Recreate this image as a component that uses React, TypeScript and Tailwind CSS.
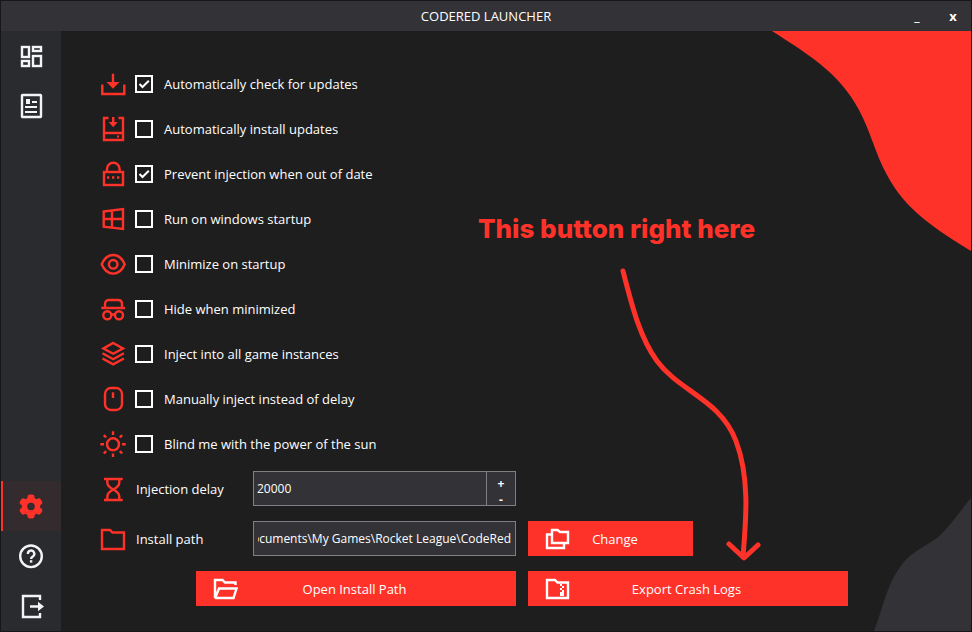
import { useState, type ReactNode } from "react";

function Icon({ children }: { children: ReactNode }) {
  return (
    <svg
      viewBox="0 0 26 26"
      className="size-[26px] shrink-0"
      fill="none"
      stroke="currentColor"
      strokeWidth="2.4"
      aria-hidden="true"
    >
      {children}
    </svg>
  );
}

const solid = { fill: "currentColor", stroke: "none" };

const DashboardIcon = () => (
  <Icon>
    <rect x="4" y="4" width="7" height="10" />
    <rect x="15" y="4" width="8" height="4" />
    <rect x="4" y="18" width="7" height="5" />
    <rect x="15" y="13" width="8" height="10" />
  </Icon>
);

const NewsIcon = () => (
  <Icon>
    <rect x="4" y="2" width="19" height="22" rx="0.5" />
    <rect x="8" y="6" width="4" height="5" {...solid} />
    <path d="M14 9h5M7 14h12M7 19h12" strokeWidth="2" />
  </Icon>
);

const GearIcon = () => (
  <Icon>
    <g {...solid}>
      <circle cx="13" cy="13.500" r="9.200" />
      <rect x="9.500" y="1.500" width="7" height="24" rx="2.500" />
      <rect x="9.500" y="1.500" width="7" height="24" rx="2.500" transform="rotate(60 13 13.500)" />
      <rect x="9.500" y="1.500" width="7" height="24" rx="2.500" transform="rotate(120 13 13.500)" />
    </g>
    <circle cx="13" cy="13.500" r="3.800" fill="#332b2e" stroke="none" />
  </Icon>
);

const HelpIcon = () => (
  <Icon>
    <circle cx="13" cy="13.300" r="10.800" />
    <path d="M9.900 11a3.200 3.200 0 1 1 4.900 2.500c-1.100.7-1.700 1.200-1.700 2.500" />
    <rect x="11.900" y="17.200" width="2.400" height="2.400" {...solid} />
  </Icon>
);

const ExitIcon = () => (
  <Icon>
    <path d="M22 7V3H5v21h17v-4M12 13.500h9" />
    <path d="M20 8.700 26 13.500l-6 4.800z" {...solid} />
  </Icon>
);

const DownloadIcon = () => (
  <Icon>
    <path d="M2.300 13.500V23h22v-9.500M13 2.700V12" />
    <path d="M6.500 11h13L13 17.700z" {...solid} />
  </Icon>
);

const InstallIcon = () => (
  <Icon>
    <path d="M8.500 2H4v22h19V2h-4.500M4 17h19M13.200 1v6" />
    <path d="M8.700 6h9l-4.500 5.300z" {...solid} />
    <rect x="17" y="19.500" width="2" height="2" {...solid} />
  </Icon>
);

const LockIcon = () => (
  <Icon>
    <rect x="4" y="11" width="19" height="13" />
    <path d="M7 11V8a6.300 6.300 0 0 1 12.600 0v3" />
    <path d="M7 16.500h2.300M12 16.500h2.300M17 16.500h2.300" />
  </Icon>
);

const WindowsIcon = () => (
  <Icon>
    <path d="M3.700 5.500 23 3v20L3.700 20.700zM12 4.500v17M4 13h19" />
  </Icon>
);

const EyeIcon = () => (
  <Icon>
    <path d="M1.700 13.300C4.300 7 8.500 4 13.200 4s8.900 3 11.500 9.300c-2.600 6.300-6.800 9.300-11.500 9.300s-8.900-3-11.500-9.300z" />
    <circle cx="13.200" cy="13.300" r="4.300" />
  </Icon>
);

const IncognitoIcon = () => (
  <Icon>
    <path d="M1.300 12h23.700M5 12V8c0-2.500 1.500-4 4-4h9c2.500 0 4 1.500 4 4v4M11 18.500h4" />
    <circle cx="7.300" cy="19.300" r="4" />
    <circle cx="19" cy="19.300" r="4" />
  </Icon>
);

const LayersIcon = () => (
  <Icon>
    <path d="M13.200 2 23 7.500l-9.800 5.200L3.400 7.500zM2.500 12.300l10.700 5.900 10.700-5.900M2.500 17.500l10.700 5.900 10.700-5.900" />
  </Icon>
);

const MouseIcon = () => (
  <Icon>
    <rect x="5" y="2" width="17" height="22" rx="6" />
    <path d="M13 6.300V12" />
  </Icon>
);

const SunIcon = () => (
  <Icon>
    <circle cx="13" cy="13.300" r="6" />
    <path d="M13 .300V4M13 22.500v3.500M.300 13.300H4M22 13.300h3.700M3.800 4.100l2.400 2.400M19.800 20.100l2.400 2.400M3.800 22.500l2.400-2.400M19.800 6.500l2.400-2.400" />
  </Icon>
);

const HourglassIcon = () => (
  <Icon>
    <path d="M4 3h18.700M4 24h18.700" />
    <path d="M7.300 3v3.500c0 3 2.200 5 6 7 3.800-2 6-4 6-7V3M7.300 24v-3.500c0-3 2.200-5 6-7 3.800 2 6 4 6 7V24" />
  </Icon>
);

const FolderIcon = () => (
  <Icon>
    <path d="M2 4h8l2.500 2.500H24V23H2z" />
  </Icon>
);

const FolderOpenIcon = () => (
  <Icon>
    <path d="M22.500 9V6.500H12L9.500 4H2v18M2 22.500 6 12.500h17.500L20.500 22H2" />
  </Icon>
);

const FoldersIcon = () => (
  <Icon>
    <path d="M7 4h5.500L15 6h8v11H7zM7 8.500H2V22h17v-5" />
  </Icon>
);

const ZipFolderIcon = () => (
  <Icon>
    <path d="M2 4h8l2.500 2.500H23V22H2z" />
    <path
      d="M15 8h2v2h-2zM17 10h2v2h-2zM15 12h2v2h-2zM17 14h2v2h-2zM15 16h4v4h-4z"
      {...solid}
    />
  </Icon>
);

const options = [
  { id: "check-updates", label: "Automatically check for updates", icon: DownloadIcon, on: true },
  { id: "install-updates", label: "Automatically install updates", icon: InstallIcon, on: false },
  { id: "prevent", label: "Prevent injection when out of date", icon: LockIcon, on: true },
  { id: "startup", label: "Run on windows startup", icon: WindowsIcon, on: false },
  { id: "minimize", label: "Minimize on startup", icon: EyeIcon, on: false },
  { id: "hide", label: "Hide when minimized", icon: IncognitoIcon, on: false },
  { id: "all-instances", label: "Inject into all game instances", icon: LayersIcon, on: false },
  { id: "manual", label: "Manually inject instead of delay", icon: MouseIcon, on: false },
  { id: "light", label: "Blind me with the power of the sun", icon: SunIcon, on: false },
];

function Option({ id, label, icon: Glyph, on }: (typeof options)[number]) {
  const [checked, setChecked] = useState(on);
  return (
    <li className="flex items-center">
      <span className="text-[#ff3229]">
        <Glyph />
      </span>
      <span className="relative ml-[9px] size-[18px]">
        <input
          id={id}
          type="checkbox"
          checked={checked}
          onChange={(e) => setChecked(e.target.checked)}
          className="block size-[18px] appearance-none border-2 border-white"
        />
        {checked && (
          <svg
            viewBox="0 0 18 18"
            className="pointer-events-none absolute inset-0"
            fill="none"
            stroke="white"
            strokeWidth="2"
            aria-hidden="true"
          >
            <path d="M4.500 9l3 3 6.300-6.300" />
          </svg>
        )}
      </span>
      <label htmlFor={id} className="pl-[11px]">
        {label}
      </label>
    </li>
  );
}

function NavButton({ label, active, children }: { label: string; active?: boolean; children: ReactNode }) {
  return (
    <button
      aria-label={label}
      className={
        active
          ? "flex h-[50px] items-center justify-center border-x-2 border-l-[#ff3229] border-r-transparent bg-[#332b2e] text-[#ff3229]"
          : "flex h-[50px] items-center justify-center text-[#f4f4f5]"
      }
    >
      {children}
    </button>
  );
}

export default function App() {
  const [delay, setDelay] = useState(20000);
  const [path, setPath] = useState("Documents\\My Games\\Rocket League\\CodeRed");

  return (
    <div className="flex min-h-screen flex-col border border-[#17171a] bg-[#1e1e1e] font-['Open_Sans',sans-serif] text-[13px] leading-5 font-medium text-white">
      <header className="grid h-[30px] grid-cols-[1fr_auto_1fr] items-center bg-[#333237]">
        <h1 className="col-start-2">CODERED LAUNCHER</h1>
        <div className="flex justify-end font-bold">
          <button aria-label="Minimize" className="h-[30px] w-9">
            _
          </button>
          <button aria-label="Close" className="h-[30px] w-9">
            x
          </button>
        </div>
      </header>

      <div className="flex flex-1">
        <nav className="flex w-[60px] shrink-0 flex-col bg-[#2a2b2f]">
          <NavButton label="Dashboard">
            <DashboardIcon />
          </NavButton>
          <NavButton label="News">
            <NewsIcon />
          </NavButton>
          <div className="flex-1" />
          <NavButton label="Settings" active>
            <GearIcon />
          </NavButton>
          <NavButton label="Help">
            <HelpIcon />
          </NavButton>
          <NavButton label="Exit">
            <ExitIcon />
          </NavButton>
        </nav>

        <main className="relative flex-1 overflow-hidden pt-10 pb-[25px] pl-[39px]">
          <svg
            viewBox="0 0 199 220"
            className="absolute top-0 right-0 w-[199px] fill-[#ff3229]"
            aria-hidden="true"
          >
            <path d="M0 0C34 22 67 41 87 79c11 20 16 43 28 65 19 36 49 54 84 76V0z" />
          </svg>
          <svg
            viewBox="0 0 97 133"
            className="absolute right-0 bottom-0 w-[97px] fill-[#333237]"
            aria-hidden="true"
          >
            <path d="M97 0C85 14 77 28 63 40 48 51 36 54 26 69 12 89 9 110 0 133h97z" />
          </svg>

          <ul className="relative flex flex-col gap-[19px]">
            {options.map((o) => (
              <Option key={o.id} {...o} />
            ))}
          </ul>

          <div className="relative mt-[14px] flex flex-col gap-[15px]">
            <div className="flex h-[35px] items-center">
              <span className="text-[#ff3229]">
                <HourglassIcon />
              </span>
              <label htmlFor="delay" className="w-[127px] pl-[10px]">
                Injection delay
              </label>
              <div className="flex h-[35px] w-[263px] border border-[#808084] bg-[#333237] text-[12px]">
                <input
                  id="delay"
                  value={delay}
                  onChange={(e) => setDelay(Number(e.target.value) || 0)}
                  className="min-w-0 flex-1 px-[3px] outline-none"
                />
                <div className="flex w-[29px] flex-col border-l border-[#808084] pt-1 leading-4 font-bold">
                  <button aria-label="Increase delay" className="flex-1" onClick={() => setDelay(delay + 1000)}>
                    +
                  </button>
                  <button aria-label="Decrease delay" className="flex-1" onClick={() => setDelay(delay - 1000)}>
                    -
                  </button>
                </div>
              </div>
            </div>

            <div className="flex h-[35px] items-center">
              <span className="text-[#ff3229]">
                <FolderIcon />
              </span>
              <label htmlFor="path" className="w-[127px] pl-[10px]">
                Install path
              </label>
              <input
                id="path"
                dir="rtl"
                value={path}
                onChange={(e) => setPath(e.target.value)}
                className="h-[35px] w-[263px] border border-[#808084] bg-[#333237] px-1 text-[12px] outline-none"
              />
              <button className="ml-3 flex h-[35px] w-[165px] items-center bg-[#ff3229] pr-[34px] pl-[17px]">
                <FoldersIcon />
                <span className="flex-1">Change</span>
              </button>
            </div>

            <div className="flex gap-3 pl-24">
              <button className="flex h-[35px] w-80 items-center bg-[#ff3229] pr-[46px] pl-[17px]">
                <FolderOpenIcon />
                <span className="flex-1">Open Install Path</span>
              </button>
              <button className="flex h-[35px] w-80 items-center bg-[#ff3229] pr-[46px] pl-[17px]">
                <ZipFolderIcon />
                <span className="flex-1">Export Crash Logs</span>
              </button>
            </div>
          </div>

          <div className="pointer-events-none absolute top-[182px] left-[417px] text-[#ff3229]">
            <p className="font-['Inter',sans-serif] text-[26px] leading-8 font-extrabold whitespace-nowrap">
              This button right here
            </p>
            <svg
              viewBox="0 0 144 304"
              className="ml-[139px] mt-[18px] h-[304px] w-[144px]"
              fill="none"
              stroke="currentColor"
              strokeWidth="5"
              strokeLinecap="round"
              strokeLinejoin="round"
              aria-hidden="true"
            >
              <path d="M6 8C15 43 23 75 40 98c23 31 64 39 79 80 14 37 10 79 7 116M112 281l15 14 14-13" />
            </svg>
          </div>
        </main>
      </div>
    </div>
  );
}
